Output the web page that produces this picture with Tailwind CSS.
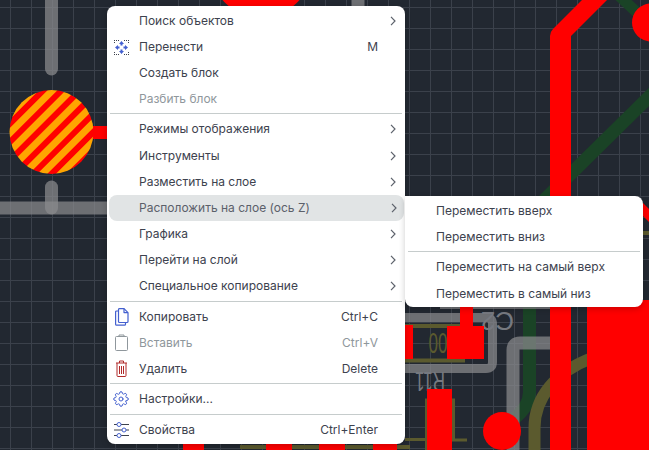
<!DOCTYPE html>
<html lang="ru">
<head>
    <meta charset="UTF-8">
    <meta name="viewport" content="width=device-width, initial-scale=1.0">
    <title>Контекстное меню</title>
    <script src="https://cdn.jsdelivr.net/npm/@tailwindcss/browser@4"></script>
</head>
<body class="relative w-[649px] h-[450px] overflow-hidden bg-[#222831] font-['Inter',sans-serif] text-[12px] text-[#3d424e]">

    <!-- Плата -->
    <svg class="absolute inset-0" width="649" height="450" viewBox="0 0 649 450" fill="none">
        <defs>
            <pattern id="grid" x="10" y="7" width="21" height="21" patternUnits="userSpaceOnUse">
                <path d="M0.5 0V21M0 0.5H21" stroke="#3b414b" stroke-width="1"/>
            </pattern>
            <pattern id="stripes" width="13" height="13" patternUnits="userSpaceOnUse" patternTransform="rotate(45 51 132)">
                <rect width="13" height="13" fill="#ffa500"/>
                <rect width="6" height="13" fill="#ff0000"/>
            </pattern>
        </defs>
        <rect width="649" height="450" fill="url(#grid)"/>

        <!-- зелёные дорожки -->
        <g stroke="#1a4326">
            <path d="M655 91L530 214" stroke-width="13"/>
            <path d="M615 -8L645 20" stroke-width="11"/>
            <path d="M529.500 300V392Q529.500 410 505 425" stroke-width="13"/>
        </g>

        <!-- жёлтые -->
        <g stroke="#5b5a2e" fill="none">
            <path d="M534.500 450V428C534.500 398 555 372 592 358" stroke-width="12"/>
            <path d="M405 326H465M405 360.500H465" stroke-width="4"/>
            <path d="M426.500 450V400H453.500V440H467M405 439.500H426" stroke-width="3"/>
            <path d="M240 447H410" stroke-width="4"/>
            <path d="M643 233H649" stroke-width="4"/>
        </g>
        <text x="428.500" y="353" fill="#5b5a2e" font-family="Liberation Sans" font-size="29" textLength="19" lengthAdjust="spacingAndGlyphs">00</text>

        <!-- серые дорожки -->
        <g stroke="#8a8b8e" stroke-opacity="0.72" stroke-width="13" stroke-linecap="round">
            <path d="M51.500 -10V69"/>
            <path d="M51.500 187V208"/>
            <path d="M-10 208H107" stroke-linecap="butt"/>
            <path d="M405 317.500H486Q492.500 317.500 492.500 324V362Q492.500 368.500 486 368.500H405" stroke-linecap="butt" stroke-width="9"/>
            <path d="M513 460V350Q513 343 520 343H552" stroke-linecap="butt"/>
            <path d="M358 -5V6" stroke-linecap="butt"/>
            <path d="M440 305H550" stroke-linecap="butt" stroke-width="8"/>
        </g>
        <g fill="#767980" font-family="Liberation Sans">
            <text transform="rotate(180 430 382)" x="415" y="392" font-size="28" textLength="30" lengthAdjust="spacingAndGlyphs">R11</text>
            <text transform="rotate(180 498 321)" x="482" y="330" font-size="26" textLength="33" lengthAdjust="spacingAndGlyphs">C2</text>
        </g>

        <!-- красные -->
        <g fill="#ff0000">
            <rect x="93" y="126" width="16" height="13"/>
            <circle cx="261" cy="-32" r="50"/>
            <path d="M550 450V36Q550 32 553 29L584 -2H609L571 36V450Z"/>
            <circle cx="651" cy="22.500" r="19"/>
            <path d="M643 203L649 209V222L643 216Z"/>
            <rect x="587" y="300" width="62" height="150"/>
            <rect x="405" y="325" width="8" height="34"/>
            <rect x="447" y="326" width="37" height="33"/>
            <rect x="460" y="300" width="13" height="27"/>
            <rect x="427" y="389" width="25" height="61"/>
            <circle cx="502" cy="431" r="19"/>
            <rect x="183" y="440" width="21" height="10"/>
            <rect x="266" y="440" width="26" height="10"/>
            <rect x="319" y="440" width="26" height="10"/>
            <rect x="373" y="440" width="24" height="10"/>
        </g>
        <circle cx="51.500" cy="132" r="42" fill="url(#stripes)"/>
    </svg>

    <!-- Контекстное меню -->
    <div class="absolute left-[107px] top-[6px] w-[298px] h-[438px] rounded-lg bg-white pt-[1.500px] shadow-[0_2px_6px_rgba(0,0,0,0.2)]">
        <ul class="flex flex-col">
            <li class="flex items-center h-[26.200px] mx-[2px] pl-[30px] leading-none"><span>Поиск объектов</span><span class="ml-auto w-[26px] flex justify-end pr-[7px]"><svg width="6" height="10" viewBox="0 0 6 10" fill="none" stroke="#5d626c" stroke-width="1.200"><path d="M1 .8L5 5L1 9.200"/></svg></span></li>
            <li class="relative flex items-center h-[26.200px] mx-[2px] pl-[30px] leading-none">
                <svg class="absolute left-[5px] top-[6px]" width="15" height="15" viewBox="0 0 15 15" fill="#4460cf">
                    <path d="M7.500 1L10 4H8.500V5.500H6.500V4H5Z"/>
                    <path d="M7.500 14L5 11H6.500V9.500H8.500V11H10Z"/>
                    <path d="M1 7.500L4 5V6.500H5.500V8.500H4V10Z"/>
                    <path d="M14 7.500L11 10V8.500H9.500V6.500H11V5Z"/>
                    <g fill="#3d424e"><rect x="0" y="0" width="1" height="1"/><rect x="2" y="0" width="1" height="1"/><rect x="0" y="2" width="1" height="1"/><rect x="12" y="0" width="1" height="1"/><rect x="14" y="0" width="1" height="1"/><rect x="14" y="2" width="1" height="1"/><rect x="0" y="12" width="1" height="1"/><rect x="0" y="14" width="1" height="1"/><rect x="2" y="14" width="1" height="1"/><rect x="14" y="12" width="1" height="1"/><rect x="14" y="14" width="1" height="1"/><rect x="12" y="14" width="1" height="1"/><rect x="4" y="0" width="1" height="1"/><rect x="10" y="0" width="1" height="1"/><rect x="4" y="14" width="1" height="1"/><rect x="10" y="14" width="1" height="1"/></g>
                </svg>
                <span>Перенести</span><span class="ml-auto pr-[25px]">M</span>
            </li>
            <li class="flex items-center h-[26.200px] mx-[2px] pl-[30px] leading-none"><span>Создать блок</span></li>
            <li class="flex items-center h-[26.200px] mx-[2px] pl-[30px] leading-none text-[#8f979c]"><span>Разбить блок</span></li>

            <li class="h-[1px] mx-[3px] mt-[1px] mb-[2px] bg-[#c6cccc]"></li>

            <li class="flex items-center h-[26.200px] mx-[2px] pl-[30px] leading-none"><span>Режимы отображения</span><span class="ml-auto w-[26px] flex justify-end pr-[7px]"><svg width="6" height="10" viewBox="0 0 6 10" fill="none" stroke="#5d626c" stroke-width="1.200"><path d="M1 .8L5 5L1 9.200"/></svg></span></li>
            <li class="flex items-center h-[26.200px] mx-[2px] pl-[30px] leading-none"><span>Инструменты</span><span class="ml-auto w-[26px] flex justify-end pr-[7px]"><svg width="6" height="10" viewBox="0 0 6 10" fill="none" stroke="#5d626c" stroke-width="1.200"><path d="M1 .8L5 5L1 9.200"/></svg></span></li>
            <li class="flex items-center h-[26.200px] mx-[2px] pl-[30px] leading-none"><span>Разместить на слое</span><span class="ml-auto w-[26px] flex justify-end pr-[7px]"><svg width="6" height="10" viewBox="0 0 6 10" fill="none" stroke="#5d626c" stroke-width="1.200"><path d="M1 .8L5 5L1 9.200"/></svg></span></li>
            <li class="flex items-center h-[26.200px] ml-[2px] mr-[1px] pl-[30px] leading-none rounded-lg bg-[#e1e4e5] text-[#5b606a]"><span>Расположить на слое (ось Z)</span><span class="ml-auto w-[25px] flex justify-end pr-[7px]"><svg width="6" height="10" viewBox="0 0 6 10" fill="none" stroke="#5d626c" stroke-width="1.200"><path d="M1 .8L5 5L1 9.200"/></svg></span></li>
            <li class="flex items-center h-[26.200px] mx-[2px] pl-[30px] leading-none"><span>Графика</span><span class="ml-auto w-[26px] flex justify-end pr-[7px]"><svg width="6" height="10" viewBox="0 0 6 10" fill="none" stroke="#5d626c" stroke-width="1.200"><path d="M1 .8L5 5L1 9.200"/></svg></span></li>
            <li class="flex items-center h-[26.200px] mx-[2px] pl-[30px] leading-none"><span>Перейти на слой</span><span class="ml-auto w-[26px] flex justify-end pr-[7px]"><svg width="6" height="10" viewBox="0 0 6 10" fill="none" stroke="#5d626c" stroke-width="1.200"><path d="M1 .8L5 5L1 9.200"/></svg></span></li>
            <li class="flex items-center h-[26.200px] mx-[2px] pl-[30px] leading-none"><span>Специальное копирование</span><span class="ml-auto w-[26px] flex justify-end pr-[7px]"><svg width="6" height="10" viewBox="0 0 6 10" fill="none" stroke="#5d626c" stroke-width="1.200"><path d="M1 .8L5 5L1 9.200"/></svg></span></li>

            <li class="h-[1px] mx-[3px] mt-[1px] mb-[2px] bg-[#c6cccc]"></li>

            <li class="relative flex items-center h-[26.200px] mx-[2px] pl-[30px] leading-none">
                <svg class="absolute left-[6px] top-[4px]" width="14" height="18" viewBox="0 0 14 18" fill="none" stroke="#4460cf" stroke-width="1.200" stroke-linejoin="round">
                    <path d="M3.500 1.500A1 1 0 0 1 4.500 .6H9L13 4.600V13.500A1 1 0 0 1 12 14.500H4.500A1 1 0 0 1 3.500 13.500Z"/>
                    <path d="M9 .6V4.600H13"/>
                    <path d="M3.500 3H1.600A1 1 0 0 0 .6 4V16.200A1 1 0 0 0 1.600 17.200H9.500A1 1 0 0 0 10.500 16.200V14.500"/>
                </svg>
                <span>Копировать</span><span class="ml-auto pr-[25px]">Ctrl+C</span>
            </li>
            <li class="relative flex items-center h-[26.200px] mx-[2px] pl-[30px] leading-none text-[#8f979c]">
                <svg class="absolute left-[6px] top-[4px]" width="13" height="17" viewBox="0 0 13 17" fill="none" stroke="#8f979c" stroke-width="1">
                    <rect x=".5" y="2.500" width="12" height="14" rx="1"/>
                    <path d="M4 2.500V1H9V2.500"/>
                </svg>
                <span>Вставить</span><span class="ml-auto pr-[25px]">Ctrl+V</span>
            </li>
            <li class="relative flex items-center h-[26.200px] mx-[2px] pl-[30px] leading-none">
                <svg class="absolute left-[6px] top-[4px]" width="13" height="17" viewBox="0 0 13 17" fill="none" stroke="#b02b2b" stroke-width="1">
                    <path d="M1 3H12M4.500 3V1H8.500V3"/>
                    <path d="M2 3V15.500A1 1 0 0 0 3 16.500H10A1 1 0 0 0 11 15.500V3"/>
                    <path d="M4.500 6V14M6.500 6V14M8.500 6V14"/>
                </svg>
                <span>Удалить</span><span class="ml-auto pr-[25px]">Delete</span>
            </li>

            <li class="h-[1px] mx-[3px] mt-[1px] mb-[2px] bg-[#c6cccc]"></li>

            <li class="relative flex items-center h-[26.200px] mx-[2px] pl-[30px] leading-none">
                <svg class="absolute left-[4px] top-[5px]" width="16" height="16" viewBox="0 0 24 24" fill="none" stroke="#4460cf" stroke-width="1.500" stroke-linecap="round" stroke-linejoin="round">
                    <circle cx="12" cy="12" r="3"/>
                    <path d="M19.400 15a1.650 1.650 0 0 0 .33 1.820l.06.06a2 2 0 1 1-2.830 2.830l-.06-.06a1.650 1.650 0 0 0-1.820-.33 1.650 1.650 0 0 0-1 1.510V21a2 2 0 1 1-4 0v-.09a1.650 1.650 0 0 0-1-1.510 1.650 1.650 0 0 0-1.820.33l-.06.06a2 2 0 1 1-2.830-2.830l.06-.06a1.650 1.650 0 0 0 .33-1.820 1.650 1.650 0 0 0-1.510-1H3a2 2 0 1 1 0-4h.09a1.650 1.650 0 0 0 1.510-1 1.650 1.650 0 0 0-.33-1.820l-.06-.06a2 2 0 1 1 2.830-2.830l.06.06a1.650 1.650 0 0 0 1.820.33h.08a1.650 1.650 0 0 0 1-1.510V3a2 2 0 1 1 4 0v.09a1.650 1.650 0 0 0 1 1.510 1.650 1.650 0 0 0 1.820-.33l.06-.06a2 2 0 1 1 2.830 2.830l-.06.06a1.650 1.650 0 0 0-.33 1.820v.08a1.650 1.650 0 0 0 1.510 1H21a2 2 0 1 1 0 4h-.09a1.650 1.650 0 0 0-1.510 1z"/>
                </svg>
                <span>Настройки...</span>
            </li>

            <li class="h-[1px] mx-[3px] mt-[2px] mb-[2px] bg-[#c6cccc]"></li>

            <li class="relative flex items-center h-[26.200px] mx-[2px] pl-[30px] leading-none">
                <svg class="absolute left-[5px] top-[5px]" width="15" height="16" viewBox="0 0 15 16" fill="none" stroke="#4460cf" stroke-width="1">
                    <path d="M0 2.500H3M7 2.500H15M0 8H8M12 8H15M0 13.500H3M7 13.500H15" stroke="#3d424e"/>
                    <circle cx="5" cy="2.500" r="2"/>
                    <circle cx="10" cy="8" r="2"/>
                    <circle cx="5" cy="13.500" r="2"/>
                </svg>
                <span>Свойства</span><span class="ml-auto pr-[25px]">Ctrl+Enter</span>
            </li>
        </ul>
    </div>

    <!-- Подменю -->
    <div class="absolute left-[405px] top-[196px] w-[238px] h-[111px] rounded-r-lg rounded-bl-lg bg-white pt-[2px] shadow-[0_2px_6px_rgba(0,0,0,0.2)]">
        <ul class="flex flex-col">
            <li class="flex items-center h-[26.200px] pl-[31px] leading-none"><span>Переместить вверх</span></li>
            <li class="flex items-center h-[26.200px] pl-[31px] leading-none"><span>Переместить вниз</span></li>
            <li class="h-[1px] mx-[3px] mt-[1px] mb-[2px] bg-[#c6cccc]"></li>
            <li class="flex items-center h-[26.200px] pl-[31px] leading-none"><span>Переместить на самый верх</span></li>
            <li class="flex items-center h-[26.200px] pl-[31px] leading-none"><span>Переместить в самый низ</span></li>
        </ul>
    </div>
</body>
</html>
